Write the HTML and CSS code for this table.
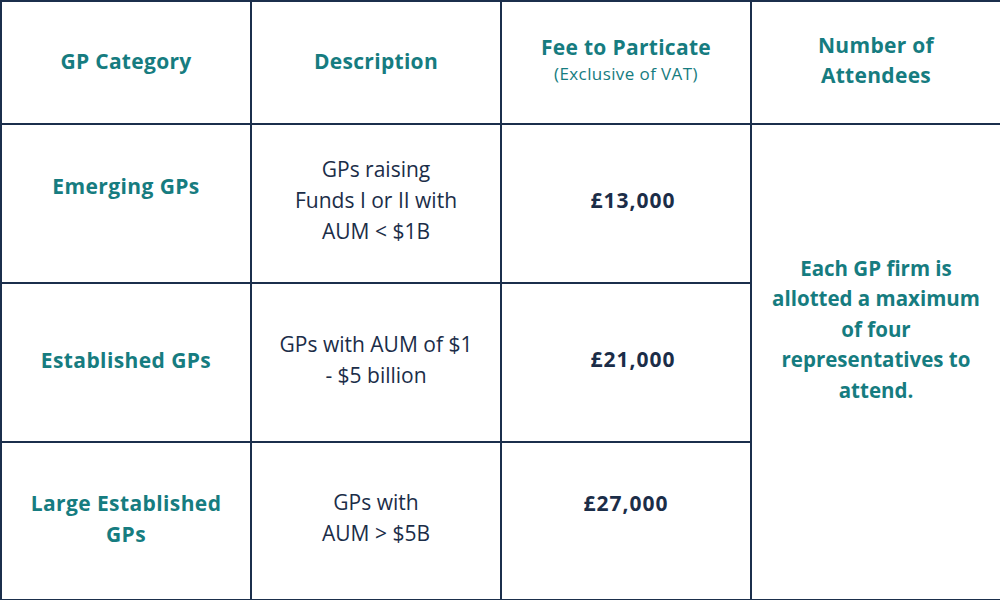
FILE: index.html
```html
<!DOCTYPE html>
<html>
<head>
<meta charset="utf-8">
<link rel="stylesheet" href="styles.css">
</head>
<body>
<table class="fees">
  <colgroup><col class="c"><col class="c"><col class="c"><col class="c"></colgroup>
  <tr class="head">
    <th class="h-cat">GP Category</th>
    <th class="h-cat">Description</th>
    <th class="h-fee">Fee to Particate<span class="sub">(Exclusive of VAT)</span></th>
    <th class="h-num">Number of<br>Attendees</th>
  </tr>
  <tr class="r1">
    <td class="cat high">Emerging GPs</td>
    <td class="desc">GPs raising<br>Funds I or II with<br>AUM &lt; $1B</td>
    <td class="price shift">£13,000</td>
    <td class="note" rowspan="3">Each GP firm is<br>allotted a maximum<br>of four<br>representatives to<br>attend.</td>
  </tr>
  <tr class="r2">
    <td class="cat">Established GPs</td>
    <td class="desc">GPs with AUM of $1<br>- $5 billion</td>
    <td class="price shift">£21,000</td>
  </tr>
  <tr class="r3">
    <td class="cat">Large Established<br>GPs</td>
    <td class="desc">GPs with<br>AUM &gt; $5B</td>
    <td class="price top">£27,000</td>
  </tr>
</table>
</body>
</html>
```
FILE: styles.css
```css
html, body {
  margin: 0;
  padding: 0;
  background: #ffffff;
}
.fees {
  width: 1000px;
  height: 600px;
  border-collapse: collapse;
  table-layout: fixed;
  font-family: "Open Sans", Lato, "Liberation Sans", sans-serif;
}
.c { width: 250px; }
.fees th, .fees td {
  border: 2px solid #1b2f4c;
  text-align: center;
  vertical-align: middle;
  padding: 0 4px 8px;
  font-size: 21px;
  line-height: 30px;
}
.head { height: 123px; }
.r1 { height: 159px; }
.r2 { height: 159px; }
.r3 { height: 158px; }
.fees .head th {
  color: #167c80;
  font-weight: 700;
  letter-spacing: 0.3px;
}
.fees .head .h-cat { padding-bottom: 4px; }
.fees .head .h-fee { padding-bottom: 8px; }
.fees .head .h-num { padding-bottom: 6px; }
.fees .sub {
  display: block;
  font-size: 17px;
  font-weight: 400;
  line-height: 24px;
  letter-spacing: 0.4px;
}
.fees .cat {
  color: #167c80;
  font-weight: 700;
  letter-spacing: 0.4px;
  line-height: 31px;
  padding-bottom: 4px;
}
.fees .cat.high { padding-bottom: 34px; }
.fees .desc {
  color: #1b2d48;
  font-weight: 400;
  line-height: 31px;
  padding-bottom: 6px;
}
.fees .price {
  color: #1b2d48;
  font-weight: 700;
  letter-spacing: 1px;
}
.fees .price.shift { padding-left: 18px; }
.fees .price.top { padding-bottom: 36px; }
.fees .note {
  color: #167c80;
  font-weight: 700;
  font-size: 20.5px;
  line-height: 30.5px;
  padding-bottom: 66px;
}
```
